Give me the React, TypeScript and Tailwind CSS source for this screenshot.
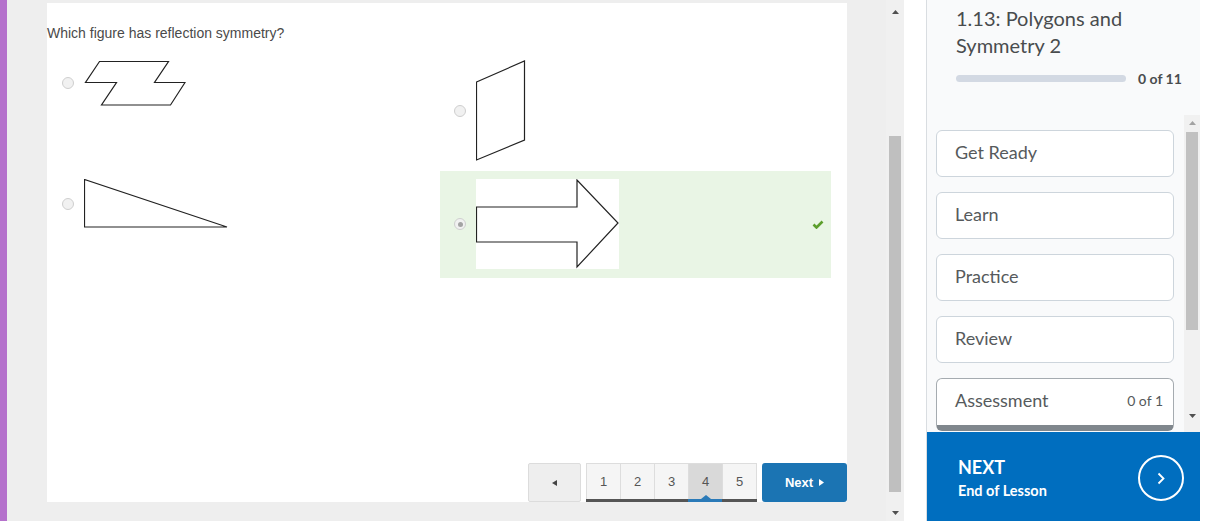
import React from "react";

function Radio({ checked }: { checked?: boolean }) {
  return (
    <span className="flex h-[12px] w-[12px] shrink-0 items-center justify-center rounded-full border border-[#cfcfcf] bg-[#f1f1f1]">
      {checked && <span className="h-[5px] w-[5px] rounded-full bg-[#a3a3a3]" />}
    </span>
  );
}

function ZShape() {
  return (
    <svg width="102" height="46" viewBox="0 0 102 46" className="shrink-0">
      <polygon
        points="15.5,1.5 84.5,1.5 70.5,22.5 101,22.5 86.5,45 17.5,45 32.5,22.5 1.5,22.5"
        fill="white"
        stroke="#222"
        strokeWidth="1.2"
      />
    </svg>
  );
}

function Parallelogram() {
  return (
    <svg width="50" height="101" viewBox="0 0 50 101" className="shrink-0">
      <polygon points="0.5,22 48.5,1 48.5,80 0.5,100" fill="white" stroke="#222" strokeWidth="1.2" />
    </svg>
  );
}

function Triangle() {
  return (
    <svg width="144" height="49" viewBox="0 0 144 49" className="shrink-0">
      <polygon points="0.5,0.5 0.5,48 143,48" fill="white" stroke="#222" strokeWidth="1.2" />
    </svg>
  );
}

function Arrow() {
  return (
    <svg width="143" height="90" viewBox="0 0 143 90" className="shrink-0 bg-white">
      <polygon
        points="0.5,28 101,28 101,1 142,44 101,88 101,63 0.5,63"
        fill="white"
        stroke="#222"
        strokeWidth="1.2"
      />
    </svg>
  );
}

function Pagination() {
  const pages = [1, 2, 3, 4, 5];
  return (
    <div className="mt-auto flex h-[39px] justify-end gap-[5px]">
      <button className="flex w-[53px] items-center justify-center rounded-[2px] border border-[#dcdcdc] bg-[#eeeeee]">
        <svg width="5" height="6" viewBox="0 0 5 6">
          <polygon points="5,0 5,6 0,3" fill="#444" />
        </svg>
      </button>
      <div className="flex w-[171px] flex-col">
        <div className="flex h-[36px] border-t border-l border-[#dddddd]">
          {pages.map((p) => (
            <button
              key={p}
              className={`relative flex flex-1 items-center justify-center border-r border-[#dddddd] text-[13px] text-[#555] ${
                p === 4 ? "bg-[#d9d9d9]" : "bg-[#f5f5f5]"
              }`}
            >
              {p}
              {p === 4 && (
                <svg width="10" height="4" viewBox="0 0 10 4" className="absolute bottom-0 left-[12px]">
                  <polygon points="0,4 5,0 10,4" fill="#2a7ab8" />
                </svg>
              )}
            </button>
          ))}
        </div>
        <div className="flex h-[3px] bg-[#555555]">
          <div className="w-[102px]" />
          <div className="w-[34px] bg-[#2a7ab8]" />
        </div>
      </div>
      <button className="flex w-[85px] items-center justify-center gap-[6px] rounded-[3px] bg-[#1b74b3] text-[13px] font-bold text-white">
        Next
        <svg width="5" height="7" viewBox="0 0 5 7">
          <polygon points="0,0 5,3.5 0,7" fill="white" />
        </svg>
      </button>
    </div>
  );
}

function MainScrollbar() {
  return (
    <div className="ml-[39px] flex h-full w-[18px] flex-col bg-[#f0f0f0]">
      <div className="flex h-[24px] items-center justify-center">
        <svg width="7" height="4" viewBox="0 0 7 4">
          <polygon points="0,4 3.5,0 7,4" fill="#505050" />
        </svg>
      </div>
      <div className="mx-[3px] mt-[112px] h-[356px] bg-[#bfbfbf]" />
      <div className="flex-1" />
      <div className="flex h-[16px] items-center justify-center">
        <svg width="7" height="4" viewBox="0 0 7 4">
          <polygon points="0,0 7,0 3.5,4" fill="#505050" />
        </svg>
      </div>
    </div>
  );
}

const steps = ["Get Ready", "Learn", "Practice", "Review"];

function Sidebar() {
  return (
    <aside className="flex w-[274px] shrink-0 flex-col border-l border-[#d9dde1] bg-[#f9fafb] font-['Lato',sans-serif] text-[#494c4e]">
      <div className="h-[115px] pl-[29px] pr-[16px] pt-[5px]">
        <h2 className="text-[20px] leading-[27px]">
          1.13: Polygons and
          <br />
          Symmetry 2
        </h2>
        <div className="mt-[9px] flex items-center gap-[12px]">
          <div className="h-[7px] w-[170px] rounded-full bg-[#d3d9e3]" />
          <span className="text-[14px] font-bold">0 of 11</span>
        </div>
      </div>

      <div className="flex h-[317px] overflow-hidden">
        <div className="flex w-[248px] flex-col gap-[15px] pl-[9px] pt-[15px]">
          {steps.map((s) => (
            <div
              key={s}
              className="flex h-[47px] w-[238px] shrink-0 items-center rounded-[6px] border border-[#cdd5dc] bg-white pb-[2px] pl-[18px] text-[18px] text-[#565a5c]"
            >
              {s}
            </div>
          ))}
          <div className="flex h-[53px] w-[238px] shrink-0 items-center justify-between rounded-[6px] border border-[#a5abb0] border-b-[6px] border-b-[#80878d] bg-white pb-[4px] pl-[18px] pr-[10px] text-[#565a5c]">
            <span className="text-[18px]">Assessment</span>
            <span className="text-[14px]">0 of 1</span>
          </div>
        </div>
        <div className="ml-[10px] flex w-[16px] flex-col bg-[#f1f1f1]">
          <div className="flex h-[15px] items-center justify-center">
            <svg width="7" height="4" viewBox="0 0 7 4">
              <polygon points="0,4 3.5,0 7,4" fill="#a3a3a3" />
            </svg>
          </div>
          <div className="mx-[2px] mt-[2px] h-[198px] bg-[#c1c1c1]" />
          <div className="flex-1" />
          <div className="flex h-[22px] items-start justify-center pt-[4px]">
            <svg width="7" height="4" viewBox="0 0 7 4">
              <polygon points="0,0 7,0 3.5,4" fill="#505050" />
            </svg>
          </div>
        </div>
      </div>

      <div className="flex h-[89px] items-center justify-between bg-[#006ebf] pl-[31px] pr-[16px] text-white">
        <div className="mt-[4px]">
          <div className="text-[18px] font-bold leading-[22px]">NEXT</div>
          <div className="mt-[3px] text-[14.5px] font-bold leading-[20px]">End of Lesson</div>
        </div>
        <div className="mt-[3px] flex h-[46px] w-[46px] items-center justify-center rounded-full border-2 border-white">
          <svg width="8" height="13" viewBox="0 0 8 13">
            <polyline points="1.5,1.5 6.5,6.5 1.5,11.5" fill="none" stroke="white" strokeWidth="1.8" />
          </svg>
        </div>
      </div>
    </aside>
  );
}

export default function App() {
  return (
    <div className="flex h-[521px] w-[1216px] overflow-hidden bg-white font-['Liberation_Sans',Arial,sans-serif]">
      <div className="w-[7px] shrink-0 bg-[#b571cc]" />
      <div className="flex w-[897px] shrink-0 bg-[#eeeeee]">
        <div className="ml-[40px] mt-[3px] flex h-[499px] w-[800px] flex-col bg-white pt-[22px]">
          <p className="text-[14px] leading-[16px] text-[#4a4a4a]">Which figure has reflection symmetry?</p>
          <div className="mt-[12px] grid grid-cols-[393px_391px] grid-rows-[118px_107px]">
            <div className="flex items-center gap-[10px] self-start pl-[15px] pt-[7px]">
              <Radio />
              <ZShape />
            </div>
            <div className="flex items-center gap-[10px] self-start pl-[14px] pt-[7px]">
              <Radio />
              <Parallelogram />
            </div>
            <div className="flex items-center gap-[10px] self-start pl-[15px] pt-[8px]">
              <Radio />
              <Triangle />
            </div>
            <div className="flex items-center gap-[10px] bg-[#e9f5e5] pb-[9px] pl-[14px] pr-[7px] pt-[8px]">
              <Radio checked />
              <Arrow />
              <svg width="12" height="9" viewBox="0 0 12 9" className="ml-auto">
                <polyline points="1.5,4.5 4.5,7.5 10.5,1.5" fill="none" stroke="#5c9e2c" strokeWidth="2.6" />
              </svg>
            </div>
          </div>
          <Pagination />
        </div>
        <MainScrollbar />
      </div>
      <div className="w-[22px] shrink-0" />
      <Sidebar />
    </div>
  );
}
